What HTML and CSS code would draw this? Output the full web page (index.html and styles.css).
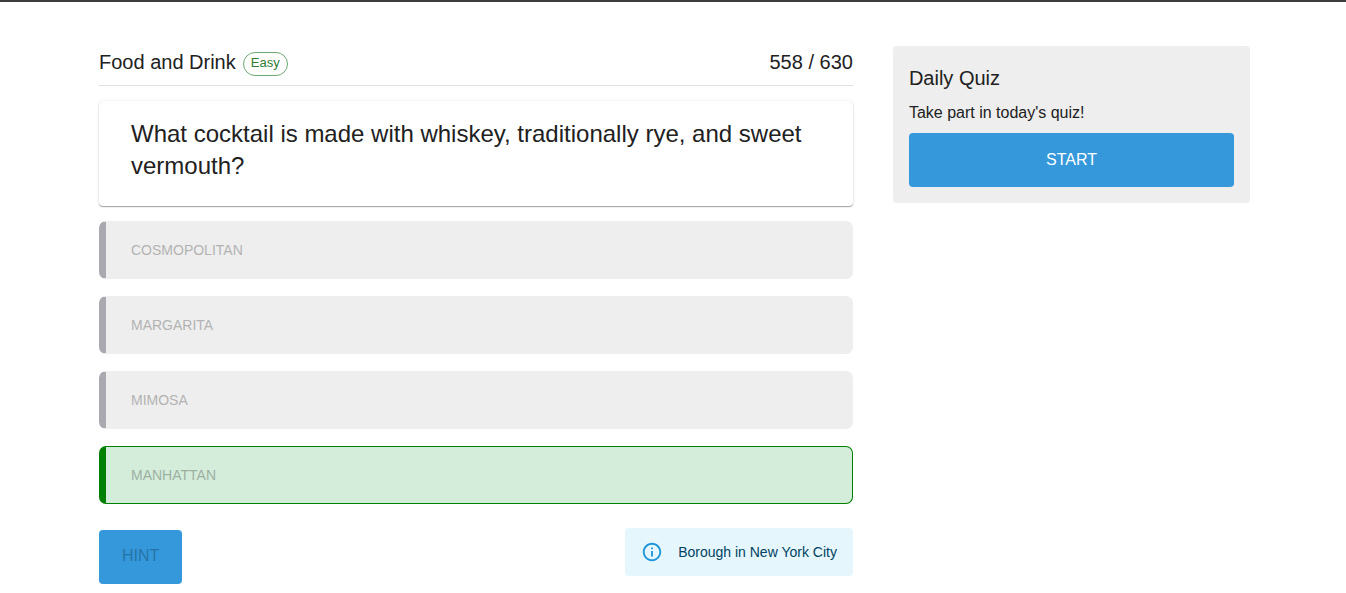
FILE: index.html
```html
<!DOCTYPE html>
<html lang="en">
<head>
    <meta charset="UTF-8">
    <meta name="viewport" content="width=device-width, initial-scale=1.0">
    <title>Food and Drink Quiz</title>
    <link rel="stylesheet" href="styles.css">
</head>
<body>
    <div class="container">
        <main class="quiz">
            <header class="quiz-header">
                <h1 class="title">Food and Drink</h1>
                <span class="chip">Easy</span>
                <span class="progress">558 / 630</span>
            </header>

            <div class="question-card">
                <h2 class="question">What cocktail is made with whiskey, traditionally rye, and sweet vermouth?</h2>
            </div>

            <div class="answers">
                <button type="button" class="answer" disabled>Cosmopolitan</button>
                <button type="button" class="answer" disabled>Margarita</button>
                <button type="button" class="answer" disabled>Mimosa</button>
                <button type="button" class="answer correct" disabled>Manhattan</button>
            </div>

            <div class="quiz-footer">
                <button type="button" class="btn hint-btn" disabled>Hint</button>
                <div class="alert" role="status">
                    <svg class="alert-icon" viewBox="0 0 24 24" aria-hidden="true">
                        <path d="M11 7h2v2h-2zm0 4h2v6h-2zm1-9C6.48 2 2 6.48 2 12s4.48 10 10 10 10-4.48 10-10S17.52 2 12 2zm0 18c-4.41 0-8-3.59-8-8s3.59-8 8-8 8 3.59 8 8-3.59 8-8 8z"/>
                    </svg>
                    <span>Borough in New York City</span>
                </div>
            </div>
        </main>

        <aside class="daily">
            <h2 class="title">Daily Quiz</h2>
            <p>Take part in today's quiz!</p>
            <button type="button" class="btn start-btn">Start</button>
        </aside>
    </div>
</body>
</html>
```

FILE: styles.css
```css
* {
    box-sizing: border-box;
}
body {
    margin: 0;
    border-top: 2px solid #3d3b3d;
    background: #fff;
    color: #212121;
    font-family: "Liberation Sans", Arial, sans-serif;
    font-size: 16px;
    line-height: 24px;
}
h1, h2, p {
    margin: 0;
    font-weight: normal;
}
button {
    font-family: inherit;
    text-transform: uppercase;
}
.container {
    display: grid;
    grid-template-columns: 19fr 9fr;
    gap: 40px;
    align-items: start;
    padding: 44px 96px 8px 99px;
}
.title, .progress {
    font-size: 20px;
    line-height: 32px;
}

/* Question */
.quiz-header {
    display: flex;
    align-items: center;
    gap: 7px;
    padding-bottom: 7px;
    border-bottom: 1px solid #e0e0e0;
}
.chip {
    height: 24px;
    margin-top: 4px;
    padding: 0 7px;
    border: 1px solid #6da770;
    border-radius: 12px;
    color: #2e7d32;
    font-size: 13px;
    line-height: 20px;
}
.progress {
    margin-left: auto;
}
.question-card {
    margin-top: 15px;
    padding: 17px 32px 24px;
    border-radius: 4px;
    box-shadow: 0 1px 1px rgba(0, 0, 0, 0.35), 0 0 3px rgba(0, 0, 0, 0.1);
}
.question {
    font-size: 24px;
    line-height: 32px;
}

/* Answers */
.answers {
    display: flex;
    flex-direction: column;
    gap: 17px;
    margin-top: 15px;
}
.answer {
    min-height: 58px;
    padding: 0 25px;
    border: 1px solid #eee;
    border-left: 7px solid #a9a9af;
    border-radius: 7px;
    background: #eee;
    color: #b3b3b3;
    font-size: 14px;
    text-align: left;
}
.answer.correct {
    border-color: #008000;
    background: #d4edda;
    color: #9db0a2;
}

/* Hint row */
.quiz-footer {
    display: flex;
    justify-content: space-between;
    align-items: flex-start;
    margin-top: 24px;
}
.btn {
    height: 54px;
    border: none;
    border-radius: 4px;
    background: #3498db;
    color: #fff;
    font-size: 16px;
}
.hint-btn {
    margin-top: 2px;
    padding: 0 23px 2px;
    color: #2774a8;
}
.alert {
    display: flex;
    align-items: center;
    gap: 15px;
    padding: 12px 16px;
    border-radius: 4px;
    background: #e5f6fd;
    color: #014361;
    font-size: 14px;
}
.alert-icon {
    width: 22px;
    height: 22px;
    fill: #1b96d8;
}

/* Daily quiz */
.daily {
    padding: 16px;
    border-radius: 4px;
    background: #eee;
}
.daily p {
    margin: 7px 0 8px;
}
.start-btn {
    display: block;
    width: 100%;
    cursor: pointer;
}
```
